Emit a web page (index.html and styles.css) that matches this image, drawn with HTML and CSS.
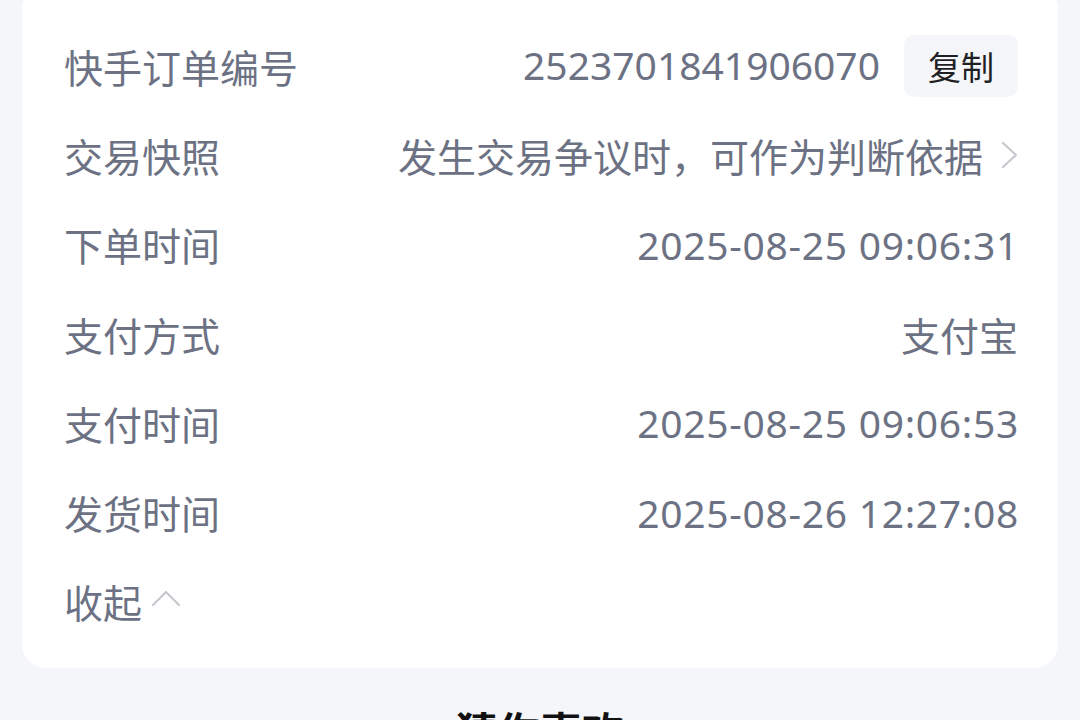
FILE: index.html
```html
<!DOCTYPE html>
<html lang="zh-CN">
<head>
<meta charset="utf-8">
<title>订单信息</title>
<link rel="stylesheet" href="styles.css">
</head>
<body>
<div class="card">
  <div class="row">
    <span class="label">快手订单编号</span>
    <span class="value">
      <span class="num">2523701841906070</span>
      <span class="copy">复制</span>
    </span>
  </div>
  <div class="row">
    <span class="label">交易快照</span>
    <span class="value">
      <span>发生交易争议时，可作为判断依据</span>
      <svg class="arrow-r" width="20" height="28" viewBox="0 0 20 28"><polyline points="3,2 16,14 3,26" fill="none" stroke="#c6c8ce" stroke-width="2.2" stroke-linecap="round" stroke-linejoin="round"/></svg>
    </span>
  </div>
  <div class="row">
    <span class="label">下单时间</span>
    <span class="value date">2025-08-25 09:06:31</span>
  </div>
  <div class="row">
    <span class="label">支付方式</span>
    <span class="value">支付宝</span>
  </div>
  <div class="row">
    <span class="label">支付时间</span>
    <span class="value date">2025-08-25 09:06:53</span>
  </div>
  <div class="row">
    <span class="label">发货时间</span>
    <span class="value date">2025-08-26 12:27:08</span>
  </div>
  <div class="row last">
    <span class="label fold">收起
      <svg class="arrow-u" width="30" height="18" viewBox="0 0 30 18"><polyline points="2,16 15,3 28,16" fill="none" stroke="#c6c8ce" stroke-width="2.2" stroke-linecap="round" stroke-linejoin="round"/></svg>
    </span>
  </div>
</div>
<h2 class="section-title">猜你喜欢</h2>
</body>
</html>
```

FILE: styles.css
```css
html, body {
  margin: 0;
  padding: 0;
}
body {
  background: #f4f6f9;
  font-family: "Noto Sans", "Noto Sans CJK SC", sans-serif;
  width: 1080px;
  height: 720px;
  overflow: hidden;
}
.card {
  margin: -14px 22px 0;
  background: #ffffff;
  border-radius: 24px;
  padding: 35px 40px 22px 42px;
}
.row {
  height: 89.3px;
  display: flex;
  align-items: center;
  justify-content: space-between;
  font-size: 39px;
  color: #6c7283;
}
.label {
  white-space: nowrap;
}
.value {
  display: flex;
  align-items: center;
  white-space: nowrap;
}
.date {
  letter-spacing: 0.7px;
  margin-right: -1px;
}
.copy {
  margin-left: 24px;
  height: 62px;
  padding: 0 24px;
  background: #f4f6f9;
  border-radius: 10px;
  color: #1f1f24;
  font-size: 33px;
  display: flex;
  align-items: center;
}
.num {
  margin-top: -2px;
}
.arrow-r {
  margin-left: 17px;
  margin-right: -2px;
}
.fold {
  display: flex;
  align-items: center;
}
.arrow-u {
  margin-left: 9px;
  margin-top: -6px;
}
.section-title {
  margin: 37px 0 0;
  text-align: center;
  font-size: 42px;
  font-weight: 700;
  color: #111;
  line-height: 50px;
  font-family: "Noto Sans CJK SC", sans-serif;
}
```
